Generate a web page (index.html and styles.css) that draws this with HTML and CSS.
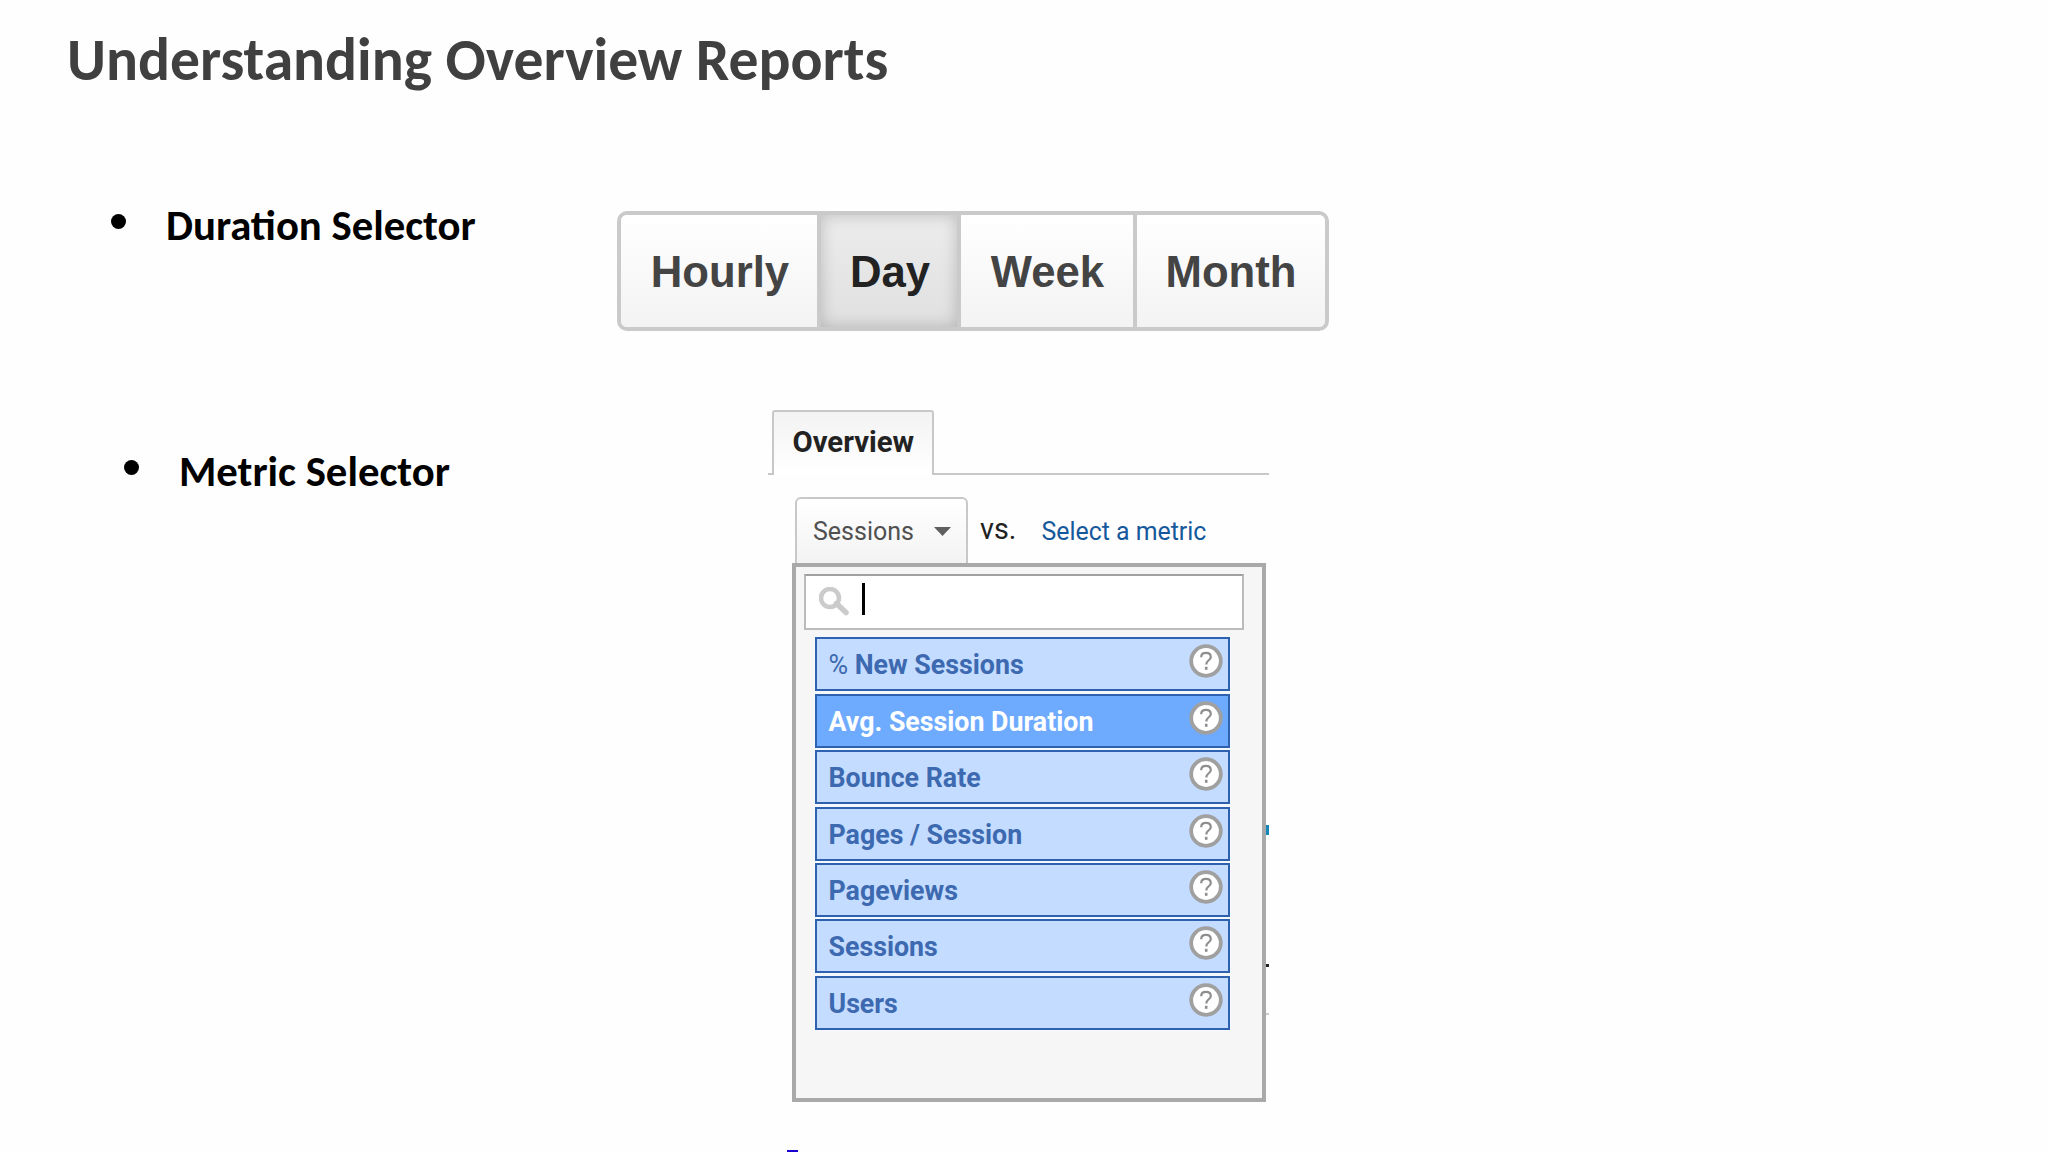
FILE: index.html
```html
<!DOCTYPE html>
<html lang="en">
<head>
<meta charset="utf-8">
<title>Understanding Overview Reports</title>
<link rel="stylesheet" href="styles.css">
</head>
<body>
<svg width="0" height="0" class="defs" aria-hidden="true">
  <symbol id="help" viewBox="0 0 34 34">
    <circle cx="17" cy="17" r="14.800" fill="#fff" stroke="#a0a0a0" stroke-width="3.800"/>
    <path d="M12.2 13.2c0-2.700 2-4.300 4.800-4.300s4.800 1.600 4.800 4.100c0 3.400-4.500 3.200-4.500 7.400" fill="none" stroke="#8e8e8e" stroke-width="2.200"/>
    <rect x="15.900" y="22.800" width="2.600" height="3" fill="#8e8e8e"/>
  </symbol>
</svg>
<main class="slide">
  <h1 class="title">Understanding Overview Reports</h1>

  <section class="row row-duration">
    <h2 class="label"><span class="bullet"></span>Duration Selector</h2>
    <div class="segments">
      <button class="segment hourly">Hourly</button>
      <button class="segment day active">Day</button>
      <button class="segment week">Week</button>
      <button class="segment month">Month</button>
    </div>
  </section>

  <section class="row row-metric">
    <h2 class="label label-metric"><span class="bullet"></span>Metric Selector</h2>
    <div class="report">
      <div class="tabs">
        <div class="tab-lead"></div>
        <div class="tab">Overview</div>
        <div class="tab-rest"></div>
      </div>
      <div class="compare">
        <button class="metric-button">Sessions
          <svg class="arrow" width="17" height="9" viewBox="0 0 17 9"><path d="M0 0h17L8.500 9z" fill="#606060"/></svg>
        </button>
        <span class="vs">vs.</span>
        <a class="select-link">Select a metric</a>
      </div>
      <div class="panel">
        <div class="search">
          <svg class="magnifier" width="32" height="30" viewBox="0 0 32 30"><circle cx="11" cy="11" r="9" fill="none" stroke="#cbcbcb" stroke-width="4.500"/><path d="M17.500 16.500l9.500 9" stroke="#cbcbcb" stroke-width="5.500" stroke-linecap="round"/></svg>
          <span class="caret"></span>
        </div>
        <ul class="metrics">
          <li class="metric"><span><span class="percent">%</span> New Sessions</span><svg class="help"><use href="#help"/></svg></li>
          <li class="metric selected">Avg. Session Duration<svg class="help"><use href="#help"/></svg></li>
          <li class="metric">Bounce Rate<svg class="help"><use href="#help"/></svg></li>
          <li class="metric">Pages / Session<svg class="help"><use href="#help"/></svg></li>
          <li class="metric">Pageviews<svg class="help"><use href="#help"/></svg></li>
          <li class="metric">Sessions<svg class="help"><use href="#help"/></svg></li>
          <li class="metric">Users<svg class="help"><use href="#help"/></svg></li>
        </ul>
        <i class="speck speck-point"></i>
        <i class="speck speck-dot"></i>
        <i class="speck speck-line"></i>
      </div>
      <i class="underline"></i>
    </div>
  </section>
</main>
</body>
</html>
```

FILE: styles.css
```css
* { box-sizing: border-box; }

body {
  margin: 0;
  background: #fefefe;
  overflow: hidden;
}

.defs { display: block; }

.slide {
  height: 1152px;
  overflow: hidden;
  font-family: Carlito, Lato, sans-serif;
}

.title {
  margin: 0;
  padding: 20px 0 0 67px;
  font-size: 59.65px;
  line-height: 80px;
  font-weight: bold;
  color: #404040;
}

.row {
  display: grid;
  align-items: start;
}

.row-duration {
  grid-template-columns: 617px auto;
  justify-content: start;
  margin-top: 95px;
}

.row-metric {
  grid-template-columns: 768px 501px;
  margin-top: 78px;
}

.label {
  display: flex;
  align-items: center;
  gap: 40px;
  margin: 0;
  padding: 0 0 0 111px;
  font-size: 42.75px;
  line-height: 60px;
  font-weight: bold;
  color: #000;
}

.label-metric { padding: 32px 0 0 124px; }

.bullet {
  width: 15px;
  height: 15px;
  margin-bottom: 7px;
  border-radius: 50%;
  background: #000;
}

button {
  margin: 0;
  border: 0;
  background: none;
}

/* Duration selector */
.segments {
  display: flex;
  width: 712px;
  height: 120px;
  margin-top: 16px;
  border: 4px solid #cacaca;
  border-radius: 10px;
  overflow: hidden;
}

.segment {
  padding: 2px 0 0;
  font: bold 43.7px "Liberation Sans", sans-serif;
  color: #444;
  background: linear-gradient(#fff, #f3f3f3);
}

.segment + .segment { border-left: 4px solid #cacaca; }

.hourly { width: 196px; padding-left: 2px; }
.segments .day { width: 144px; padding-left: 2px; }
.week { width: 172px; padding-left: 1px; }
.month { flex: 1; }

.active {
  color: #222;
  background: linear-gradient(#ececec, #e0e0e0);
  border-right: 4px solid #cacaca;
  box-shadow: inset 0 0 16px rgba(0, 0, 0, .2);
}

.segments .week { border-left: 0; }

/* Metric selector */
.report {
  position: relative;
  height: 743px;
  font-family: Roboto, sans-serif;
}

.tabs {
  display: flex;
  height: 66px;
  padding-top: 1px;
}

.tab-lead { width: 4px; border-bottom: 2px solid #c8c8c8; }
.tab-rest { flex: 1; border-bottom: 2px solid #c8c8c8; }

.tab {
  width: 162px;
  padding-left: 18.5px;
  border: 2px solid #c8c8c8;
  border-bottom: 0;
  border-radius: 3px 3px 0 0;
  background: linear-gradient(#f3f3f3, #fff);
  font-size: 29.3px;
  line-height: 61px;
  font-weight: bold;
  color: #222;
}

.compare {
  display: flex;
  height: 88px;
  padding: 22px 0 0 27px;
}

.metric-button {
  display: flex;
  align-items: center;
  justify-content: space-between;
  width: 173px;
  height: 68px;
  padding: 0 15px 0 16px;
  border: 2px solid #c8c8c8;
  border-radius: 6px 6px 0 0;
  background: linear-gradient(#fff, #f3f3f3);
  font: 25px Roboto, sans-serif;
  color: #505050;
}

.vs {
  margin-left: 12px;
  font-size: 28.8px;
  line-height: 64px;
  color: #222;
}

.select-link {
  margin-left: 25px;
  font-size: 24.9px;
  line-height: 70px;
  color: #15599c;
}

.panel {
  position: relative;
  width: 474px;
  height: 539px;
  margin-left: 24px;
  padding: 7px 18px 0 8px;
  border: 4px solid #a9a9a9;
  background: #f6f6f6;
}

.search {
  display: flex;
  align-items: flex-start;
  width: 440px;
  height: 56px;
  padding: 11px 0 0 13px;
  border: 2px solid #bbb;
  border-top-color: #a0a0a0;
  background: #fff;
}

.caret {
  width: 3px;
  height: 32px;
  margin: -4px 0 0 11px;
  background: #000;
}

.metrics {
  display: grid;
  gap: 2.4px;
  width: 415px;
  margin: 7.4px 0 0 11px;
  padding: 0;
  list-style: none;
}

.metric {
  display: flex;
  justify-content: space-between;
  height: 54px;
  padding: 0 5px 0 11.5px;
  border: 2px solid #2f62ae;
  outline: 1px solid #f4f9ff;
  background: #c4dcff;
  font-size: 26.75px;
  line-height: 52px;
  font-weight: bold;
  color: #3c69af;
}

.selected {
  background: #6eabff;
  color: #fff;
}

.percent { font-weight: normal; }

.help {
  width: 34px;
  height: 34px;
  margin-top: 5px;
}

/* Fragments of the report that show from behind the panel */
.speck {
  position: absolute;
  left: 470px;
  width: 3px;
}

.speck-point { top: 258px; height: 10px; background: #1488b8; }
.speck-dot { top: 397px; height: 3px; background: #222; }
.speck-line { top: 446px; height: 2px; background: #ccc; }

.underline {
  position: absolute;
  left: 19px;
  top: 741px;
  width: 11px;
  height: 2px;
  background: #1a00d0;
}
```
